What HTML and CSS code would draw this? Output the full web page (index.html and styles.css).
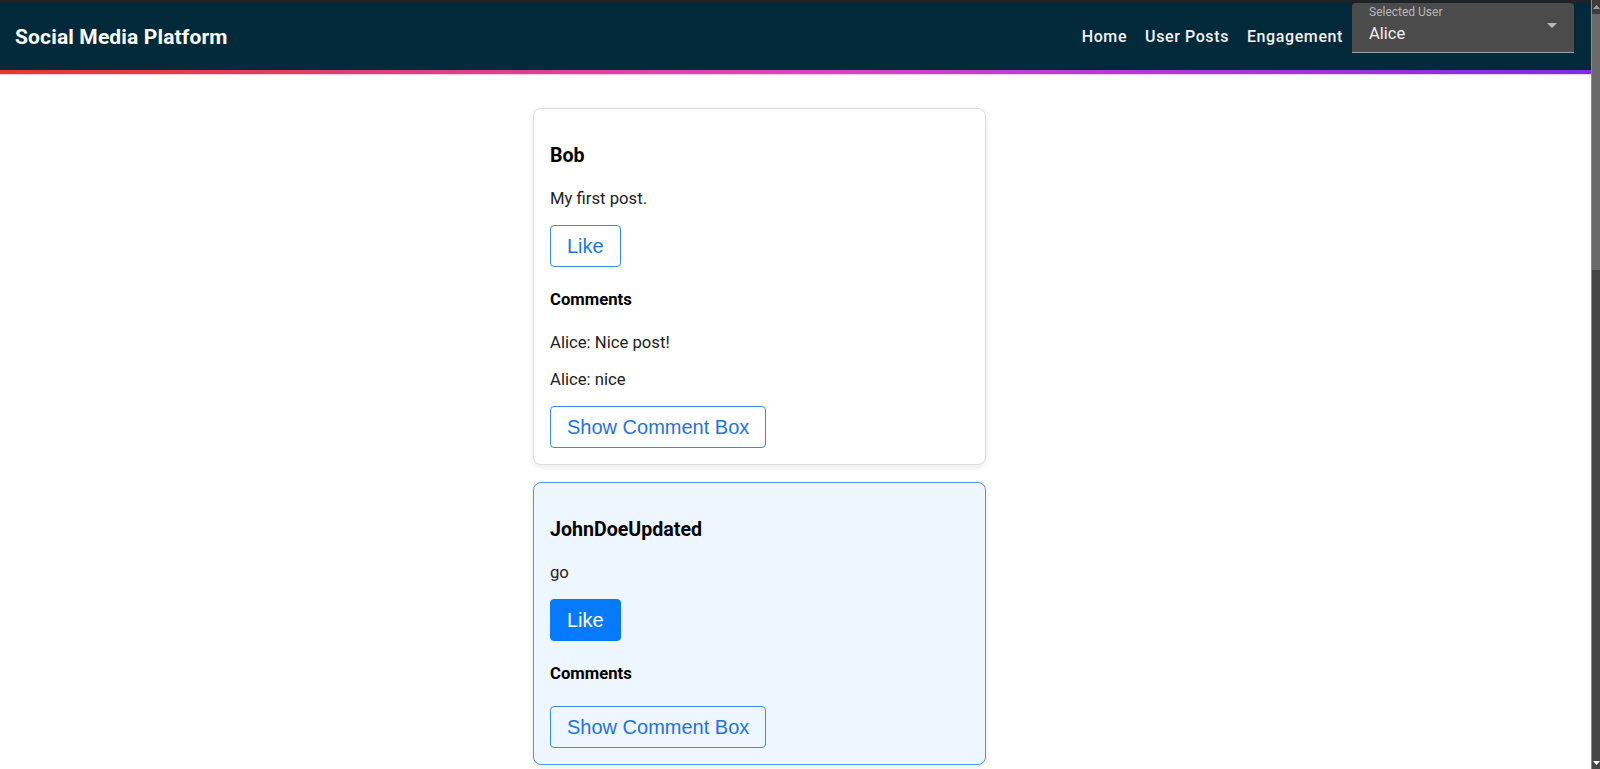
FILE: index.html
```html
<!DOCTYPE html>
<html lang="en">
<head>
<meta charset="utf-8">
<title>Social Media Platform</title>
<link rel="stylesheet" href="styles.css">
</head>
<body>
<div class="window">
  <div class="viewport">
    <div class="top-strip"></div>
    <header class="appbar">
      <div class="brand">Social Media Platform</div>
      <nav class="nav">
        <a class="nav-link">Home</a>
        <a class="nav-link">User Posts</a>
        <a class="nav-link">Engagement</a>
      </nav>
      <div class="select">
        <span class="select-label">Selected User</span>
        <span class="select-value">Alice</span>
        <svg class="select-arrow" width="10" height="5" viewBox="0 0 10 5"><path d="M0 0h10L5 5z" fill="#b8b8b8"/></svg>
      </div>
    </header>
    <div class="accent"></div>
    <main class="feed">
      <article class="card">
        <h3 class="author">Bob</h3>
        <p class="post-text">My first post.</p>
        <div class="actions"><button class="btn btn-outline">Like</button></div>
        <h4 class="comments-title">Comments</h4>
        <p class="comment">Alice: Nice post!</p>
        <p class="comment">Alice: nice</p>
        <div class="actions"><button class="btn btn-outline">Show Comment Box</button></div>
      </article>
      <article class="card card-liked">
        <h3 class="author">JohnDoeUpdated</h3>
        <p class="post-text">go</p>
        <div class="actions"><button class="btn btn-filled">Like</button></div>
        <h4 class="comments-title">Comments</h4>
        <div class="actions"><button class="btn btn-outline">Show Comment Box</button></div>
      </article>
    </main>
  </div>
  <div class="scrollbar">
    <div class="sb-up"><svg width="7" height="4" viewBox="0 0 7 4"><path d="M0 4L3.5 0 7 4z" fill="#a0a0a0"/></svg></div>
    <div class="sb-thumb"></div>
    <div class="sb-track"></div>
    <div class="sb-down"><svg width="7" height="4" viewBox="0 0 7 4"><path d="M0 0h7L3.5 4z" fill="#ffffff"/></svg></div>
  </div>
</div>
</body>
</html>
```
FILE: styles.css
```css
html, body {
  margin: 0;
  padding: 0;
  height: 769px;
  overflow: hidden;
  background: #ffffff;
  font-family: Roboto, "Liberation Sans", Arial, sans-serif;
}

.window {
  display: flex;
  height: 769px;
}

.viewport {
  flex: 1;
  display: flex;
  flex-direction: column;
  min-width: 0;
  overflow: hidden;
  background: #ffffff;
}

.top-strip {
  flex-shrink: 0;
  height: 3px;
  background: #202326;
}

.appbar {
  flex-shrink: 0;
  height: 67px;
  background: #032a3a;
  display: flex;
  align-items: center;
  padding: 0 17px 0 15px;
  color: #ffffff;
}

.brand {
  font-size: 21px;
  font-weight: 700;
  letter-spacing: 0.15px;
  flex: 1;
}

.nav {
  display: flex;
  align-items: center;
}

.nav-link {
  font-size: 16px;
  font-weight: 500;
  letter-spacing: 0.6px;
  padding: 6px 9px;
  color: #f2f2f2;
}

.select {
  align-self: flex-start;
  position: relative;
  width: 222px;
  height: 50px;
  box-sizing: border-box;
  background: #4b4b4b;
  border-bottom: 1px solid #9aa4a6;
  border-radius: 4px 4px 0 0;
  display: flex;
  flex-direction: column;
  padding-left: 17px;
}

.select-label {
  font-size: 12px;
  color: #b8b8b8;
  line-height: 14px;
  margin-top: 2px;
}

.select-value {
  font-size: 16.5px;
  color: #eeeeee;
  line-height: 20px;
  margin-top: 5px;
}

.select-arrow {
  position: absolute;
  right: 17px;
  top: 20px;
}

.accent {
  flex-shrink: 0;
  height: 4px;
  background: linear-gradient(90deg, #e63a2c 0%, #de44c4 50%, #7d2ce6 100%);
  border-bottom: 1px solid #f6d0e6;
}

.feed {
  flex-shrink: 0;
  padding: 33px 0 0 533px;
}

.card {
  width: 453px;
  box-sizing: border-box;
  border: 1px solid #dcdcdc;
  border-radius: 8px;
  padding: 16px;
  margin-bottom: 17px;
  background: #ffffff;
  box-shadow: 0 2px 6px rgba(0, 0, 0, 0.09);
}

.card-liked {
  background: #eef6ff;
  border-color: #4f97ea;
}

.author {
  font-size: 19.6px;
  font-weight: 700;
  line-height: 24px;
  margin: 19px 0 20px;
  color: #000000;
}

.post-text {
  font-size: 16.7px;
  line-height: 21px;
  margin: 0;
  color: #222222;
}

.actions {
  margin: 16px 0;
}

.actions:last-child {
  margin-bottom: 0;
}

.comments-title {
  font-size: 16.7px;
  font-weight: 700;
  line-height: 21px;
  margin: 22px 0;
  color: #000000;
}

.comment {
  font-size: 16.7px;
  line-height: 21px;
  margin: 16px 0;
  color: #222222;
}

.btn {
  font-family: "Liberation Sans", Arial, sans-serif;
  font-size: 20px;
  line-height: 24px;
  padding: 8px 16px;
  border-radius: 4px;
  cursor: pointer;
}

.btn-outline {
  background: transparent;
  border: 1px solid #3d8ae6;
  color: #1f74dc;
}

.btn-filled {
  background: #057bfb;
  border: 1px solid #057bfb;
  color: #ffffff;
}

.scrollbar {
  flex-shrink: 0;
  width: 8px;
  border-left: 1px solid #8c8c8c;
  display: flex;
  flex-direction: column;
  background: #454545;
}

.sb-up {
  height: 14px;
  background: #3c3c3c;
  display: flex;
  align-items: center;
  justify-content: center;
}

.sb-thumb {
  height: 256px;
  background: #6a6a6a;
}

.sb-track {
  flex: 1;
  background: #454545;
}

.sb-down {
  height: 12px;
  display: flex;
  align-items: center;
  justify-content: center;
}
```
